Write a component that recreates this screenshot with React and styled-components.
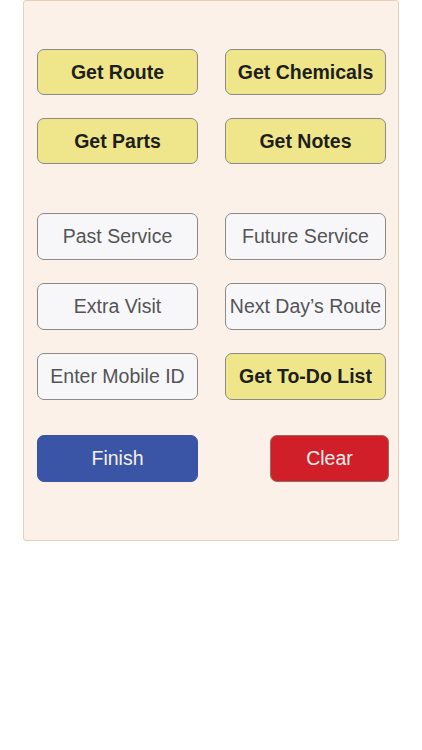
import React from "react";
import styled, { createGlobalStyle } from "styled-components";

const GlobalStyle = createGlobalStyle`
  body {
    margin: 0;
    background: #ffffff;
    font-family: "Liberation Sans", Arial, sans-serif;
  }
`;

const Panel = styled.div`
  box-sizing: border-box;
  width: 376px;
  height: 541px;
  margin-left: 23px;
  border: 1px solid #e6cfb6;
  border-radius: 3px;
  background: #fbf1e9;
  padding: 48px 0 0 13px;
  display: flex;
  flex-direction: column;
`;

const Grid = styled.div`
  display: grid;
  grid-template-columns: 161px 161px;
  column-gap: 27px;
  row-gap: ${(p) => p.gap}px;
  margin-bottom: ${(p) => p.after}px;
`;

const Btn = styled.button`
  box-sizing: border-box;
  height: ${(p) => p.h || 47}px;
  padding: 0;
  border: 1px solid ${(p) => (p.kind === "yellow" || p.kind === "white" ? "#8c8a84" : "#9a6a5a")};
  border-radius: 7px;
  font-family: "Liberation Sans", Arial, sans-serif;
  font-size: 19.5px;
  white-space: nowrap;
  font-weight: ${(p) => (p.kind === "yellow" ? 700 : 400)};
  color: ${(p) =>
    p.kind === "yellow" ? "#1e1e1c" : p.kind === "white" ? "#545454" : "#f6f0ee"};
  background: ${(p) =>
    p.kind === "yellow"
      ? "#efe68b"
      : p.kind === "white"
      ? "#f7f7fa"
      : p.kind === "blue"
      ? "#3a55a6"
      : "#d11f2a"};
`;

const Footer = styled.div`
  display: flex;
  align-items: center;
`;

const FinishBtn = styled(Btn)`
  width: 161px;
  border-color: #3a55a6;
`;

const ClearBtn = styled(Btn)`
  width: 119px;
  margin-left: 72px;
`;

export default function App() {
  return (
    <>
      <GlobalStyle />
      <Panel>
        <Grid gap={23} after={49}>
          <Btn kind="yellow" h={46}>Get Route</Btn>
          <Btn kind="yellow" h={46}>Get Chemicals</Btn>
          <Btn kind="yellow" h={46}>Get Parts</Btn>
          <Btn kind="yellow" h={46}>Get Notes</Btn>
        </Grid>
        <Grid gap={23} after={35}>
          <Btn kind="white">Past Service</Btn>
          <Btn kind="white">Future Service</Btn>
          <Btn kind="white">Extra Visit</Btn>
          <Btn kind="white">Next Day’s Route</Btn>
          <Btn kind="white">Enter Mobile ID</Btn>
          <Btn kind="yellow">Get To-Do List</Btn>
        </Grid>
        <Footer>
          <FinishBtn kind="blue">Finish</FinishBtn>
          <ClearBtn kind="red">Clear</ClearBtn>
        </Footer>
      </Panel>
    </>
  );
}
